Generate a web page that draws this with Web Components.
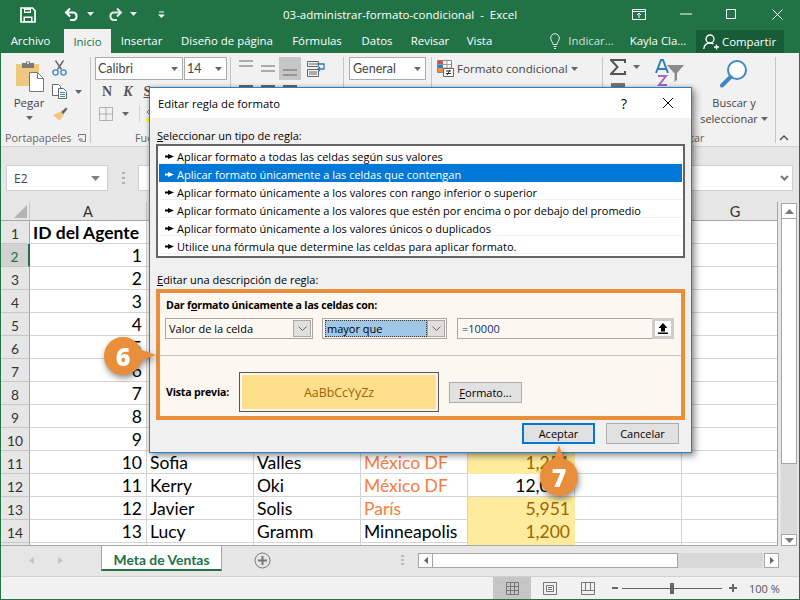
<![CDATA[<!DOCTYPE html>
<html lang="es"><head><meta charset="utf-8"><title>Excel</title>
<style>
html,body{margin:0;padding:0;background:#e6e6e6;overflow:hidden}
body{font-family:"Open Sans","Liberation Sans",sans-serif}
</style>
<script>
class Base extends HTMLElement{
  constructor(){super();const r=this.attachShadow({mode:'open'});r.innerHTML=`<style>:host{display:block;box-sizing:border-box}*{box-sizing:border-box}svg{display:block;flex:none}${this.css()}</style>${this.html()}`;}
  css(){return ''} html(){return ''}
}
const caret=(c='#666')=>`<svg width="7" height="4" viewBox="0 0 7 4"><path d="M0 0h7L3.500 4z" fill="${c}"/></svg>`;

class XTitlebar extends Base{
 css(){return `:host{height:28px;background:#217346;color:#fff;display:flex;align-items:center;position:relative;font:11.5px/28px "Open Sans",sans-serif}
 .q{display:flex;align-items:center;padding-left:19px;width:282px}
 .t{width:349px;white-space:pre;padding-top:2px}
 .w{display:flex;align-items:center}`}
 html(){return `<div class="q">
 <svg width="16" height="16" viewBox="0 0 16 16" style="margin-top:1px"><path d="M1 1h11.500L15 3.500V15H1z" fill="none" stroke="#fff" stroke-width="1.700"/><path d="M4 1h7v5H4zM3.500 9.500h9V15h-9z" fill="#fff"/><path d="M5 3h5v1.600H5zM5 11h6v3H5z" fill="#217346"/></svg>
 <svg width="16" height="14" viewBox="0 0 16 14" style="margin-left:28px"><path d="M6 1.500 2 5.500l4 4M2.500 5.500H10a4 4 0 0 1 0 7.500H6" fill="none" stroke="#fff" stroke-width="2"/></svg>
 <span style="margin-left:7px">${caret('#e8efe9')}</span>
 <svg width="16" height="14" viewBox="0 0 16 14" style="margin-left:13px"><path d="M10 1.500l4 4-4 4M13.500 5.500H6a4 4 0 0 0 0 7.500h4" fill="none" stroke="#dfe9e3" stroke-width="2"/></svg>
 <span style="margin-left:7px">${caret('#e8efe9')}</span>
 <svg width="7" height="7" viewBox="0 0 7 7" style="margin-left:21px"><path d="M1 .5h5v1H1z" fill="#fff"/><path d="M0 3.500h7L3.500 7z" fill="#fff"/></svg>
 </div><div class="t">03-administrar-formato-condicional  -  Excel</div>
 <div class="w">
 <svg width="14" height="11" viewBox="0 0 14 11"><path d="M.5.500h13v10H.5zM.5 2.500h13" fill="none" stroke="#fff"/><path d="M7 4v5M5 6l2-2 2 2" fill="none" stroke="#fff"/></svg>
 <svg width="12" height="2" viewBox="0 0 12 2" style="margin-left:34px"><path d="M0 1h12" stroke="#fff"/></svg>
 <svg width="10" height="10" viewBox="0 0 10 10" style="margin-left:34px"><path d="M.5.500h9v9h-9z" fill="none" stroke="#fff"/></svg>
 <svg width="11" height="11" viewBox="0 0 11 11" style="margin-left:36px"><path d="M.5.500l10 10M10.500.500l-10 10" stroke="#fff" fill="none"/></svg>
 </div>`}
}
class XTabs extends Base{
 css(){return `:host{height:25px;background:#217346;color:#fff;display:flex;align-items:stretch;font:11.4px/26px "Open Sans",sans-serif}
 span{display:block;text-align:center;white-space:nowrap}
 .a{background:#f1f1f1;color:#217346;margin-top:1px;line-height:25px}
 .r{margin-left:auto;display:flex;align-items:center}
 .dim{color:#cfe0d6}
 .sh{background:#185c37;width:88px;height:23px;margin:2px 15px 0 0;display:flex;align-items:center;padding-left:7px;gap:3px}`}
 html(){return `<span style="width:59px;margin-right:4px">Archivo</span><span class="a" style="width:47px">Inicio</span><span style="width:61px">Insertar</span><span style="width:110px">Diseño de página</span><span style="width:70px">Fórmulas</span><span style="width:50px">Datos</span><span style="width:56px">Revisar</span><span style="width:43px">Vista</span>
 <div class="r"><svg width="10" height="16" viewBox="0 0 10 16"><path d="M3 11.500C3 9 .7 8 .7 5a4.300 4.300 0 0 1 8.600 0c0 3-2.300 4-2.300 6.500zM3.500 13.500h3M4 15.500h2" fill="none" stroke="#e4eee8"/></svg>
 <span class="dim" style="margin-left:8px;width:46px">Indicar...</span><span style="margin-left:15px;width:58px">Kayla Cla...</span>
 <div class="sh" style="margin-left:9px"><svg width="16" height="16" viewBox="0 0 16 16"><circle cx="7" cy="5" r="4" fill="none" stroke="#fff" stroke-width="1.300"/><path d="M.8 15c.3-3.500 2.500-6 6.200-6 1.500 0 2.600.4 3.500 1M11 13h5M13.500 10.500v5" fill="none" stroke="#fff" stroke-width="1.300"/></svg><span>Compartir</span></div></div>`}
}
class XRgroup extends Base{
 connectedCallback(){this.style.width=this.getAttribute('w')+'px';
  this.shadowRoot.querySelector('.l').textContent=this.getAttribute('label')||'';
  const lp=this.getAttribute('lpad'); if(lp){const e=this.shadowRoot.querySelector('.l');e.style.textAlign='left';e.style.paddingLeft=lp+'px';}
  if(this.hasAttribute('launcher'))this.shadowRoot.querySelector('.la').style.display='block';}
 css(){return `:host{position:relative;height:92px;display:flex;flex-direction:column;flex:none}
 .c{flex:1;min-height:0}
 .b{display:flex;height:14px;position:relative}
 .sep{position:absolute;right:0;top:4px;bottom:2px;width:1px;background:#c6c6c6}
 .l{flex:1;text-align:center;font:10.800px/14px "Open Sans",sans-serif;color:#666;white-space:nowrap}
 .la{display:none;position:absolute;right:5px;top:3px}`}
 html(){return `<div class="c"><slot></slot></div><div class="b"><div class="l"></div><svg class="la" width="8" height="8" viewBox="0 0 8 8"><path d="M.5 3V.5H7.500v7H5M.5 5l3 3M1 5h3v3" fill="none" stroke="#777"/></svg></div><div class="sep"></div>`}
}
class XRibbon extends Base{
 css(){return `:host{height:94px;background:#f1f1f1;border-bottom:1px solid #d2d2d2;display:flex;font:11.500px/16px "Open Sans",sans-serif;color:#444;align-items:flex-start}
 .row{display:flex;align-items:center}
 .col{display:flex;flex-direction:column;align-items:center}
 .box{background:#fff;border:1px solid #ababab;height:23px;display:flex;align-items:center;justify-content:space-between;padding:0 4px 0 2px;color:#444;font:12.500px/16px Lato,sans-serif}
 .b{font:bold 14px/16px "Liberation Serif",serif;color:#555}
 .lb{text-align:center;line-height:16px;font-size:11px}
 .on{background:#c6c6c6}
 .al{width:22px;height:23px;display:flex;justify-content:center}
 .blk{width:14px;height:12px;background:#666;margin:0 4px}`}
 html(){
 const ln=`<svg width="14" height="7" viewBox="0 0 14 7"><path d="M0 1h14M0 6h14" stroke="#666"/></svg>`;
 return `
 <x-rgroup w="90" label="Portapapeles" launcher lpad="4"><div class="row" style="align-items:flex-start;padding:7px 0 0 5px">
  <div class="col" style="width:46px">
   <svg width="30" height="32" viewBox="0 0 30 32" style="margin-left:2px"><path d="M1 4h23v22H1z" fill="#f0c77e"/><path d="M7 3h4V1.500h4V3h4v5H7z" fill="#7a7a7a"/><circle cx="13" cy="3" r="1" fill="#f1f1f1"/><path d="M14.500 12.500h8l6 6v13h-14z" fill="#fff" stroke="#777"/><path d="M22.500 12.500v6h6" fill="none" stroke="#777"/></svg>
   <div style="margin-top:3px;font-size:11.500px">Pegar</div><div style="margin-top:5px">${caret()}</div>
  </div>
  <div class="col" style="align-items:flex-start;width:26px">
   <svg width="15" height="16" viewBox="0 0 15 16"><path d="M3.500 .5l6 9M11.500 .5l-6 9" stroke="#666" stroke-width="1.400" fill="none"/><circle cx="3.500" cy="12.500" r="2.600" fill="none" stroke="#3f87c5" stroke-width="1.400"/><circle cx="11.500" cy="12.500" r="2.600" fill="none" stroke="#3f87c5" stroke-width="1.400"/></svg>
   <div class="row" style="margin-top:8px"><svg width="16" height="15" viewBox="0 0 16 15"><path d="M.5.5h6l2 2v9h-8z" fill="#fff" stroke="#666"/><path d="M6.500 4.500h5l3 3v7h-8z" fill="#fff" stroke="#666"/><path d="M8 8.500h5M8 10.500h5M8 12.500h5" stroke="#3f87c5"/></svg><span style="margin-left:7px">${caret()}</span></div>
   <svg width="16" height="14" viewBox="0 0 16 14" style="margin-top:8px"><path d="M9 5l5-4.500 1.500 1.500L11 7.500z" fill="#666"/><path d="M8.500 4.500l3.500 3.500-4.500 5.500L1 8z" fill="#f0c77e"/></svg>
  </div></div></x-rgroup>
 <x-rgroup w="140" label="Fuente" lpad="44"><div style="padding:4px 0 0 4px">
  <div class="row"><div class="box" style="width:88px"><span>Calibri</span>${caret()}</div><div class="box" style="width:43px;margin-left:1px"><span>14</span>${caret()}</div></div>
  <div class="row" style="margin-top:3px;height:18px;padding-left:7px"><span class="b">N</span><span class="b" style="margin-left:11px;font-style:italic">K</span><span class="b" style="margin-left:11px;text-decoration:underline">S</span></div>
  <div class="row" style="margin-top:4px;padding-left:4px"><svg width="14" height="14" viewBox="0 0 14 14"><path d="M.5.500h13v13H.5zM7 .5v13M.5 7h13" fill="none" stroke="#777" stroke-dasharray="1 1"/></svg><span style="margin-left:9px">${caret()}</span><span style="width:1px;height:17px;background:#d0d0d0;margin-left:10px"></span><svg width="11" height="16" viewBox="0 0 11 16" style="margin-left:6px"><path d="M6 1L1 6l4 4 5-5z" fill="#fff" stroke="#777"/><path d="M0 13h10v3H0z" fill="#ff0"/></svg></div>
 </div></x-rgroup>
 <x-rgroup w="113" label="Alineación"><div style="padding:4px 0 0 4px">
  <div class="row">
   <div class="al" style="align-items:flex-start;padding-top:3px">${ln}</div>
   <div class="al" style="align-items:center">${ln}</div>
   <div class="al on" style="align-items:flex-end;padding-bottom:4px">${ln}</div>
   <svg width="18" height="16" viewBox="0 0 18 16" style="margin-left:6px"><path d="M.5.500h11v5H.5zM.5 8.500h11v7H.5z" fill="none" stroke="#666"/><path d="M2 3h8M2 11h8M2 13h8" stroke="#666"/><path d="M10 3h7v5h-6M13 6l-2 2 2 2" fill="none" stroke="#2f7ec1" stroke-width="1.300"/></svg>
  </div>
  <div class="row" style="margin-top:5px"><span class="blk"></span><span class="blk" style="margin-left:4px"></span><span class="blk" style="margin-left:4px"></span></div>
 </div></x-rgroup>
 <x-rgroup w="88" label="Número"><div style="padding:4px 0 0 5px"><div class="box" style="width:77px;padding-left:3px"><span>General</span>${caret()}</div></div></x-rgroup>
 <x-rgroup w="171" label="Estilos"><div style="padding:7px 0 0 5px">
  <div class="row"><svg width="17" height="17" viewBox="0 0 17 17"><path d="M.5.500h14v12H.5z" fill="#fff" stroke="#888"/><path d="M1 1h5v3.500H1z" fill="#d9533c"/><path d="M1 4.500h5V8H1z" fill="#2f7ec1"/><path d="M1 8h5v4H1z" fill="#e9923b"/><path d="M6 4.500h8.500M6 8h8.500M10 .5v12" stroke="#999"/><path d="M6.500 8.500h10v8h-10z" fill="#fff" stroke="#666"/><path d="M9 11h5M9 13.500h5M13 9.800l-3 5.400" stroke="#333" fill="none"/></svg>
  <span style="margin-left:3px;font-size:11.600px;white-space:nowrap">Formato condicional</span><span style="margin-left:3px">${caret()}</span></div>
 </div></x-rgroup>
 <x-rgroup w="173" label="Editar"><div class="row" style="padding:6px 0 0 7px;align-items:flex-start">
  <div class="col" style="width:40px;align-items:flex-start"><div class="row"><svg width="16" height="16" viewBox="0 0 16 16"><path d="M15 4V1H1l6.500 7L1 15h14v-3" fill="none" stroke="#555" stroke-width="2"/></svg><span style="margin-left:7px">${caret()}</span></div><div style="width:14px;height:5px;background:#777;margin-top:8px;margin-left:1px"></div></div>
  <svg width="30" height="28" viewBox="0 0 30 28" style="margin-left:5px"><path d="M1 14L6 1h2l5 13M3 10h8" fill="none" stroke="#2f7ec1" stroke-width="2"/><path d="M3 17h8l-7 9h8" fill="none" stroke="#9d6cc0" stroke-width="2"/><path d="M12 6h17l-7 8v7l-3 2v-9z" fill="#8a8a8a"/><path d="M19 14v8" stroke="#fff"/></svg>
  <div class="col" style="margin-left:15px;width:68px"><svg width="28" height="30" viewBox="0 0 28 30"><circle cx="17" cy="11" r="9" fill="#fff" stroke="#3f87c5" stroke-width="2"/><path d="M10.500 18L2 26.500" stroke="#3f87c5" stroke-width="4" stroke-linecap="round"/></svg>
  <div class="lb" style="margin-top:6px;white-space:nowrap">Buscar y</div><div class="row lb" style="white-space:nowrap">seleccionar<span style="margin-left:3px">${caret()}</span></div></div>
  </div></x-rgroup>
 <svg width="10" height="6" viewBox="0 0 10 6" style="margin:82px 0 0 3px"><path d="M1 5l4-4 4 4" fill="none" stroke="#555" stroke-width="1.500"/></svg>`}
}
class XFormula extends Base{
 css(){return `:host{height:55px;background:#e6e6e6;padding-top:18px;display:flex;align-items:flex-start;font:12px "Open Sans",sans-serif;color:#444}
 .n{margin-left:5px;width:102px;height:26px;background:#fff;border:1px solid #d0d0d0;display:flex;align-items:center;justify-content:space-between;padding:0 7px 0 7px}
 .d{margin-left:14px;width:3px;height:12px;margin-top:7px;background:repeating-linear-gradient(#b0b0b0 0 2px,transparent 2px 5px)}
 .f{margin-left:13px;width:655px;height:26px;background:#fff;border:1px solid #d0d0d0;display:flex;justify-content:flex-end;align-items:center;padding-right:3px}`}
 html(){return `<div class="n"><span>E2</span>${caret('#808080').replace('width="7" height="4"','width="9" height="5"')}</div><div class="d"></div><div class="f"><svg width="9" height="6" viewBox="0 0 9 6"><path d="M1 1l3.500 3.500L8 1" fill="none" stroke="#777" stroke-width="2"/></svg></div>`}
}
class XSheet extends Base{
 css(){return `:host{height:344px;display:flex;background:#e6e6e6}
 .g{width:777px;height:344px;overflow:hidden;display:grid;grid-template-columns:29px 117px 107px 107px 107px 107px 107px 95px;grid-template-rows:19px repeat(15,23px);background:#fff;border-right:1px solid #a6a6a6;border-bottom:1px solid #a6a6a6;font:17.500px/24px Lato,"Open Sans",sans-serif;color:#000}
 .c{border-right:1px solid #d4d4d4;border-bottom:1px solid #d4d4d4;padding:0 3px;white-space:nowrap;overflow:hidden;background:#fff}
 .r{text-align:right;padding-right:4px}
 .h{background:#e6e6e6;text-align:center;font:14.500px/19px Lato,sans-serif;color:#333;border-bottom:1px solid #a6a6a6;border-right:1px solid #c8c8c8;padding:0}
 .rh{background:#e6e6e6;text-align:center;font:13.800px/25px Lato,sans-serif;color:#333;border-right:1px solid #a6a6a6;border-bottom:1px solid #c6c6c6;padding:0}
 .sel{background:#d2d2d2;color:#217346;border-right:2px solid #217346}
 .b{font-weight:700}.o{color:#f97c3e}.y{background:#ffeb9c;color:#9c6500;border-color:transparent}
 .last{border-right:0;padding-left:11px}
 .corner{position:relative;padding:0}
 .corner svg{position:absolute;right:2px;bottom:2px}
 .v{width:16px;margin:1px 0 0 3px;height:343px;display:flex;flex-direction:column;background:#dadada}
 .bt{height:16px;background:#fff;border:1px solid #a6a6a6;display:flex;align-items:center;justify-content:center;flex:none}
 .th{height:245px;background:#fff;border:1px solid #a6a6a6;border-top:0;flex:none}
 .sp{flex:1}`}
 html(){
  const cols=['','A','','','','','','G'];
  let s=cols.map((t,i)=>i==0?`<div class="c h corner"><svg width="13" height="13" viewBox="0 0 13 13"><path d="M13 0v13H0z" fill="#b4b4b4"/></svg></div>`:`<div class="c h ${i==7?'last':''}">${t}</div>`).join('');
  const rows={1:{a:'ID del Agente',b:1},2:{a:'1'},3:{a:'2'},4:{a:'3'},5:{a:'4'},6:{a:'5'},7:{a:'6'},8:{a:'7'},9:{a:'8'},10:{a:'9'},
   11:{a:'10',n:'Sofia',l:'Valles',c:'México DF',co:1,e:'1,251',y:1},12:{a:'11',n:'Kerry',l:'Oki',c:'México DF',co:1,e:'12,000'},13:{a:'12',n:'Javier',l:'Solis',c:'París',co:1,e:'5,951',y:1},14:{a:'13',n:'Lucy',l:'Gramm',c:'Minneapolis',e:'1,200',y:1},15:{y:1}};
  for(let i=1;i<=15;i++){const r=rows[i];
   s+=`<div class="c rh ${i==2?'sel':''}">${i<15?i:''}</div>`;
   s+=`<div class="c ${r.b?'b':'r'}">${r.a||''}</div><div class="c">${r.n||''}</div><div class="c">${r.l||''}</div><div class="c ${r.co?'o':''}">${r.c||''}</div><div class="c r ${r.y?'y':''}">${r.e||''}</div><div class="c"></div><div class="c last"></div>`;}
  return `<div class="g">${s}</div><div class="v"><div class="bt"><svg width="9" height="5" viewBox="0 0 9 5"><path d="M0 5h9L4.500 0z" fill="#777"/></svg></div><div class="th"></div><div class="sp"></div><div class="bt" style="height:12px"><svg width="9" height="5" viewBox="0 0 9 5"><path d="M0 0h9L4.500 5z" fill="#777"/></svg></div></div>`}
}
class XSheetTabs extends Base{
 css(){return `:host{height:31px;background:#e6e6e6;border-bottom:1px solid #d0d0d0;display:flex;align-items:flex-start}
 .n{width:100px;display:flex;padding:11px 0 0 28px;gap:24px}
 .t{width:121px;height:25px;background:#fff;border:1px solid #a6a6a6;border-top:0;border-bottom:2px solid #217346;color:#217346;font:bold 13.900px/27px Lato,sans-serif;text-align:center}
 .p{margin:6px 0 0 32px}
 .d{margin:9px 0 0 130px;width:3px;height:12px;background:repeating-linear-gradient(#bdbdbd 0 2px,transparent 2px 4px)}
 .s{display:flex;margin:7px 0 0 14px;height:15px}
 .a{width:15px;background:#fff;border:1px solid #a6a6a6;display:flex;align-items:center;justify-content:center}
 .th{width:245px;background:#fff;border:1px solid #a6a6a6;border-left:0}.tr{width:85px;background:#d8d8d8}`}
 html(){return `<div class="n"><svg width="5" height="7" viewBox="0 0 5 7"><path d="M5 0v7L0 3.500z" fill="#c4c4c4"/></svg><svg width="5" height="7" viewBox="0 0 5 7"><path d="M0 0v7l5-3.500z" fill="#c4c4c4"/></svg></div><div class="t">Meta de Ventas</div>
 <svg class="p" width="17" height="17" viewBox="0 0 17 17"><circle cx="8.500" cy="8.500" r="7.500" fill="none" stroke="#777"/><path d="M4 8.500h9M8.500 4v9" stroke="#777" stroke-width="2"/></svg>
 <div class="d"></div><div class="s"><div class="a"><svg width="4" height="7" viewBox="0 0 4 7"><path d="M4 0v7L0 3.500z" fill="#666"/></svg></div><div class="th"></div><div class="tr"></div><div class="a" style="margin-left:1px"><svg width="4" height="7" viewBox="0 0 4 7"><path d="M0 0v7l4-3.500z" fill="#666"/></svg></div></div>`}
}
class XStatus extends Base{
 css(){return `:host{height:22px;background:#f1f1f1;display:flex;align-items:center;font:11px "Open Sans",sans-serif;color:#555;padding-left:492px}
 .on{background:#c6c6c6;width:38px;height:22px;display:flex;align-items:center;justify-content:center}
 .sl{position:relative;width:100px;height:1px;background:#666;margin:0 7px 0 4px}
 .k{position:absolute;left:48px;top:-5px;width:4px;height:11px;background:#666}`}
 html(){return `<div class="on"><svg width="13" height="13" viewBox="0 0 13 13"><path d="M.5.500h12v12H.5zM4.500.500v12M8.500.500v12M.5 4.500h12M.5 8.500h12" fill="none" stroke="#777"/></svg></div>
 <svg width="14" height="13" viewBox="0 0 14 13" style="margin-left:12px"><path d="M.5.500h13v12H.5z" fill="none" stroke="#777"/><path d="M3.500 3.500h7v6h-7zM5 5.500h4M5 7.500h4" fill="none" stroke="#777"/></svg>
 <svg width="14" height="13" viewBox="0 0 14 13" style="margin-left:24px"><path d="M.5.500h13v12H.5zM.5 8.500h13M4.500.5v8M9.500.5v8" fill="none" stroke="#777"/></svg>
 <svg width="6" height="2" viewBox="0 0 6 2" style="margin-left:17px"><path d="M0 1h6" stroke="#666" stroke-width="2"/></svg>
 <div class="sl"><div class="k"></div></div>
 <svg width="8" height="8" viewBox="0 0 8 8"><path d="M0 4h8M4 0v8" stroke="#666" stroke-width="2"/></svg>
 <span style="margin-left:12px">100 %</span>`}
}
class XDialog extends Base{
 css(){return `:host{position:absolute;left:148px;top:87px;width:543px;height:366px;background:#f0f0f0;border:1px solid #2b7fc7;box-shadow:3px 3px 7px rgba(0,0,0,.4),0 0 4px rgba(0,0,0,.2);font:11px/15px "Open Sans",sans-serif;color:#000}
 .tb{height:30px;background:#fff;display:flex;align-items:center;padding:0 17px 0 8px;font-size:11.300px}
 .tb .sp{flex:1}
 .body{padding:0 6px 0 6px}
 .lab{padding-left:1px;height:15px;white-space:nowrap}
 .list{height:114px;border:2px solid #646464;background:#fff;padding:0 1px;margin-top:1px}
 .it{height:18px;display:flex;align-items:center;padding:4px 0 0 6px;border-bottom:1px solid #efefef;white-space:nowrap}
 .it span{margin-left:3px}
 .it.s{background:#0078d7;color:#fff;border-color:#0078d7}
 .box{margin-top:2px;height:131px;border:4px solid #e98e3b;background:#fdf7f2}
 .h{font-weight:700;font-size:10.600px;letter-spacing:-.2px;padding:5px 0 0 6px;height:20px;white-space:nowrap}
 .ctl{display:flex;margin-top:5px;padding-left:5px;height:21px}
 .sel{border:1px solid #aca7a4;background:#fdf7f2;display:flex;align-items:center;position:relative;height:21px;padding-left:3px}
 .ar{position:absolute;right:1px;top:1px;bottom:1px;width:18px;background:#e1dfdb;border:1px solid #aca7a4;display:flex;align-items:center;justify-content:center}
 .hi{background:#9fc7e8;border:1px dotted #333;height:17px;width:102px;display:flex;align-items:center;padding-left:1px}
 .inp{margin-left:10px;width:217px;border:1px solid #aca7a4;position:relative;padding-left:4px;display:flex;align-items:center;color:#122d70}
 .up{position:absolute;right:-1px;top:-1px;width:22px;height:21px;background:#cfcdca;display:flex;align-items:center;justify-content:center}
 .up i{display:flex;width:16px;height:15px;background:#fff;align-items:center;justify-content:center}
 .div{height:1px;background:#c9c5c2;margin-top:16px}
 .pv{display:flex;align-items:center;margin-top:16px;padding-left:6px;height:40px}
 .pl{font-weight:700;font-size:10.600px;letter-spacing:-.2px;width:73px;white-space:nowrap}
 .pb{width:200px;height:40px;border:1px solid #5c5450;padding:2px;margin-right:10px;background:#fdf7f2}
 .pb div{height:100%;background:#fddf8c;color:#9c6500;display:flex;align-items:center;justify-content:center;font-size:12.400px}
 .btn{width:73px;height:21px;background:#e1e1e1;border:1px solid #adadad;display:flex;align-items:center;justify-content:center;white-space:nowrap}
 .ft{display:flex;justify-content:flex-end;gap:11px;margin-top:3px;padding-right:6px}
 .def{border:2px solid #0078d7}`}
 html(){
  const chev=`<svg width="9" height="5" viewBox="0 0 9 5"><path d="M.5.500l4 4 4-4" fill="none" stroke="#666"/></svg>`;
  const ar=(c='#000')=>`<svg width="9" height="7" viewBox="0 0 9 7" style="flex:none"><path d="M0 2.500h3V1l6 2.500L3 6V4.500H0z" fill="${c}"/></svg>`;
  const items=['Aplicar formato a todas las celdas según sus valores','Aplicar formato únicamente a las celdas que contengan','Aplicar formato únicamente a los valores con rango inferior o superior','Aplicar formato únicamente a los valores que estén por encima o por debajo del promedio','Aplicar formato únicamente a los valores únicos o duplicados','Utilice una fórmula que determine las celdas para aplicar formato.'];
  return `<div class="tb"><span>Editar regla de formato</span><span class="sp"></span><span style="font-size:14px;margin-right:35px">?</span><svg width="12" height="12" viewBox="0 0 12 12"><path d="M1 1l10 10M11 1L1 11" stroke="#000" fill="none"/></svg></div>
  <div class="body">
  <div class="lab" style="margin-top:10px"><u>S</u>eleccionar un tipo de regla:</div>
  <div class="list">${items.map((t,i)=>`<div class="it ${i==1?'s':''}">${ar(i==1?'#fff':'#000')}<span>${t}</span></div>`).join('')}</div>
  <div class="lab" style="margin-top:14px"><u>E</u>ditar una descripción de regla:</div>
  <div class="box">
   <div class="h">Dar f<u>o</u>rmato únicamente a las celdas con:</div>
   <div class="ctl"><div class="sel" style="width:148px">Valor de la celda<div class="ar">${chev}</div></div>
   <div class="sel" style="width:125px;margin-left:9px;padding-left:2px"><div class="hi">mayor que</div><div class="ar">${chev}</div></div>
   <div class="sel inp">=10000<div class="up"><i><svg width="10" height="11" viewBox="0 0 10 11"><path d="M5 0l4.500 5H7v3.500H3V5H.5zM0 9.500h10V11H0z" fill="#000"/></svg></i></div></div></div>
   <div class="div"></div>
   <div class="pv"><div class="pl">Vista previa:</div><div class="pb"><div>AaBbCcYyZz</div></div><div class="btn"><u>F</u>ormato...</div></div>
  </div>
  <div class="ft"><div class="btn def">Aceptar</div><div class="btn">Cancelar</div></div>
  </div>`}
}
class XMarker extends Base{
 connectedCallback(){this.style.left=this.getAttribute('x')+'px';this.style.top=this.getAttribute('y')+'px';this.shadowRoot.querySelector('.d').textContent=this.getAttribute('n');
  const dir=this.getAttribute('dir');const p=this.shadowRoot.querySelector('path');
  p.setAttribute('d',dir=='right'?'M35 12L52 18 35 24z':'M13 5L19 -13 25 5z');}
 css(){return `:host{position:absolute;width:38px;height:38px;filter:drop-shadow(1px 3px 3px rgba(0,0,0,.45))}
 svg{position:absolute;left:0;top:0;overflow:visible}
 .d{position:absolute;inset:0;border-radius:50%;background:#e98e3b;color:#fff;font:800 25px/38px "Open Sans",sans-serif;text-align:center}`}
 html(){return `<svg width="38" height="38"><path fill="#e98e3b" d=""/></svg><div class="d"></div>`}
}
class XApp extends Base{
 css(){return `:host{position:relative;width:800px;height:600px;overflow:hidden;border:1px solid #217346;border-top:0;background:#e6e6e6}`}
 html(){return `<x-titlebar></x-titlebar><x-tabs></x-tabs><x-ribbon></x-ribbon><x-formula></x-formula><x-sheet></x-sheet><x-sheettabs></x-sheettabs><x-status></x-status>
 <x-dialog></x-dialog><x-marker n="6" x="103" y="337" dir="right"></x-marker><x-marker n="7" x="539" y="458" dir="up"></x-marker>`}
}
customElements.define('x-rgroup',XRgroup);
customElements.define('x-titlebar',XTitlebar);
customElements.define('x-tabs',XTabs);
customElements.define('x-ribbon',XRibbon);
customElements.define('x-formula',XFormula);
customElements.define('x-sheet',XSheet);
customElements.define('x-sheettabs',XSheetTabs);
customElements.define('x-status',XStatus);
customElements.define('x-dialog',XDialog);
customElements.define('x-marker',XMarker);
customElements.define('x-app',XApp);
</script>
</head><body><x-app></x-app></body></html>]]>
